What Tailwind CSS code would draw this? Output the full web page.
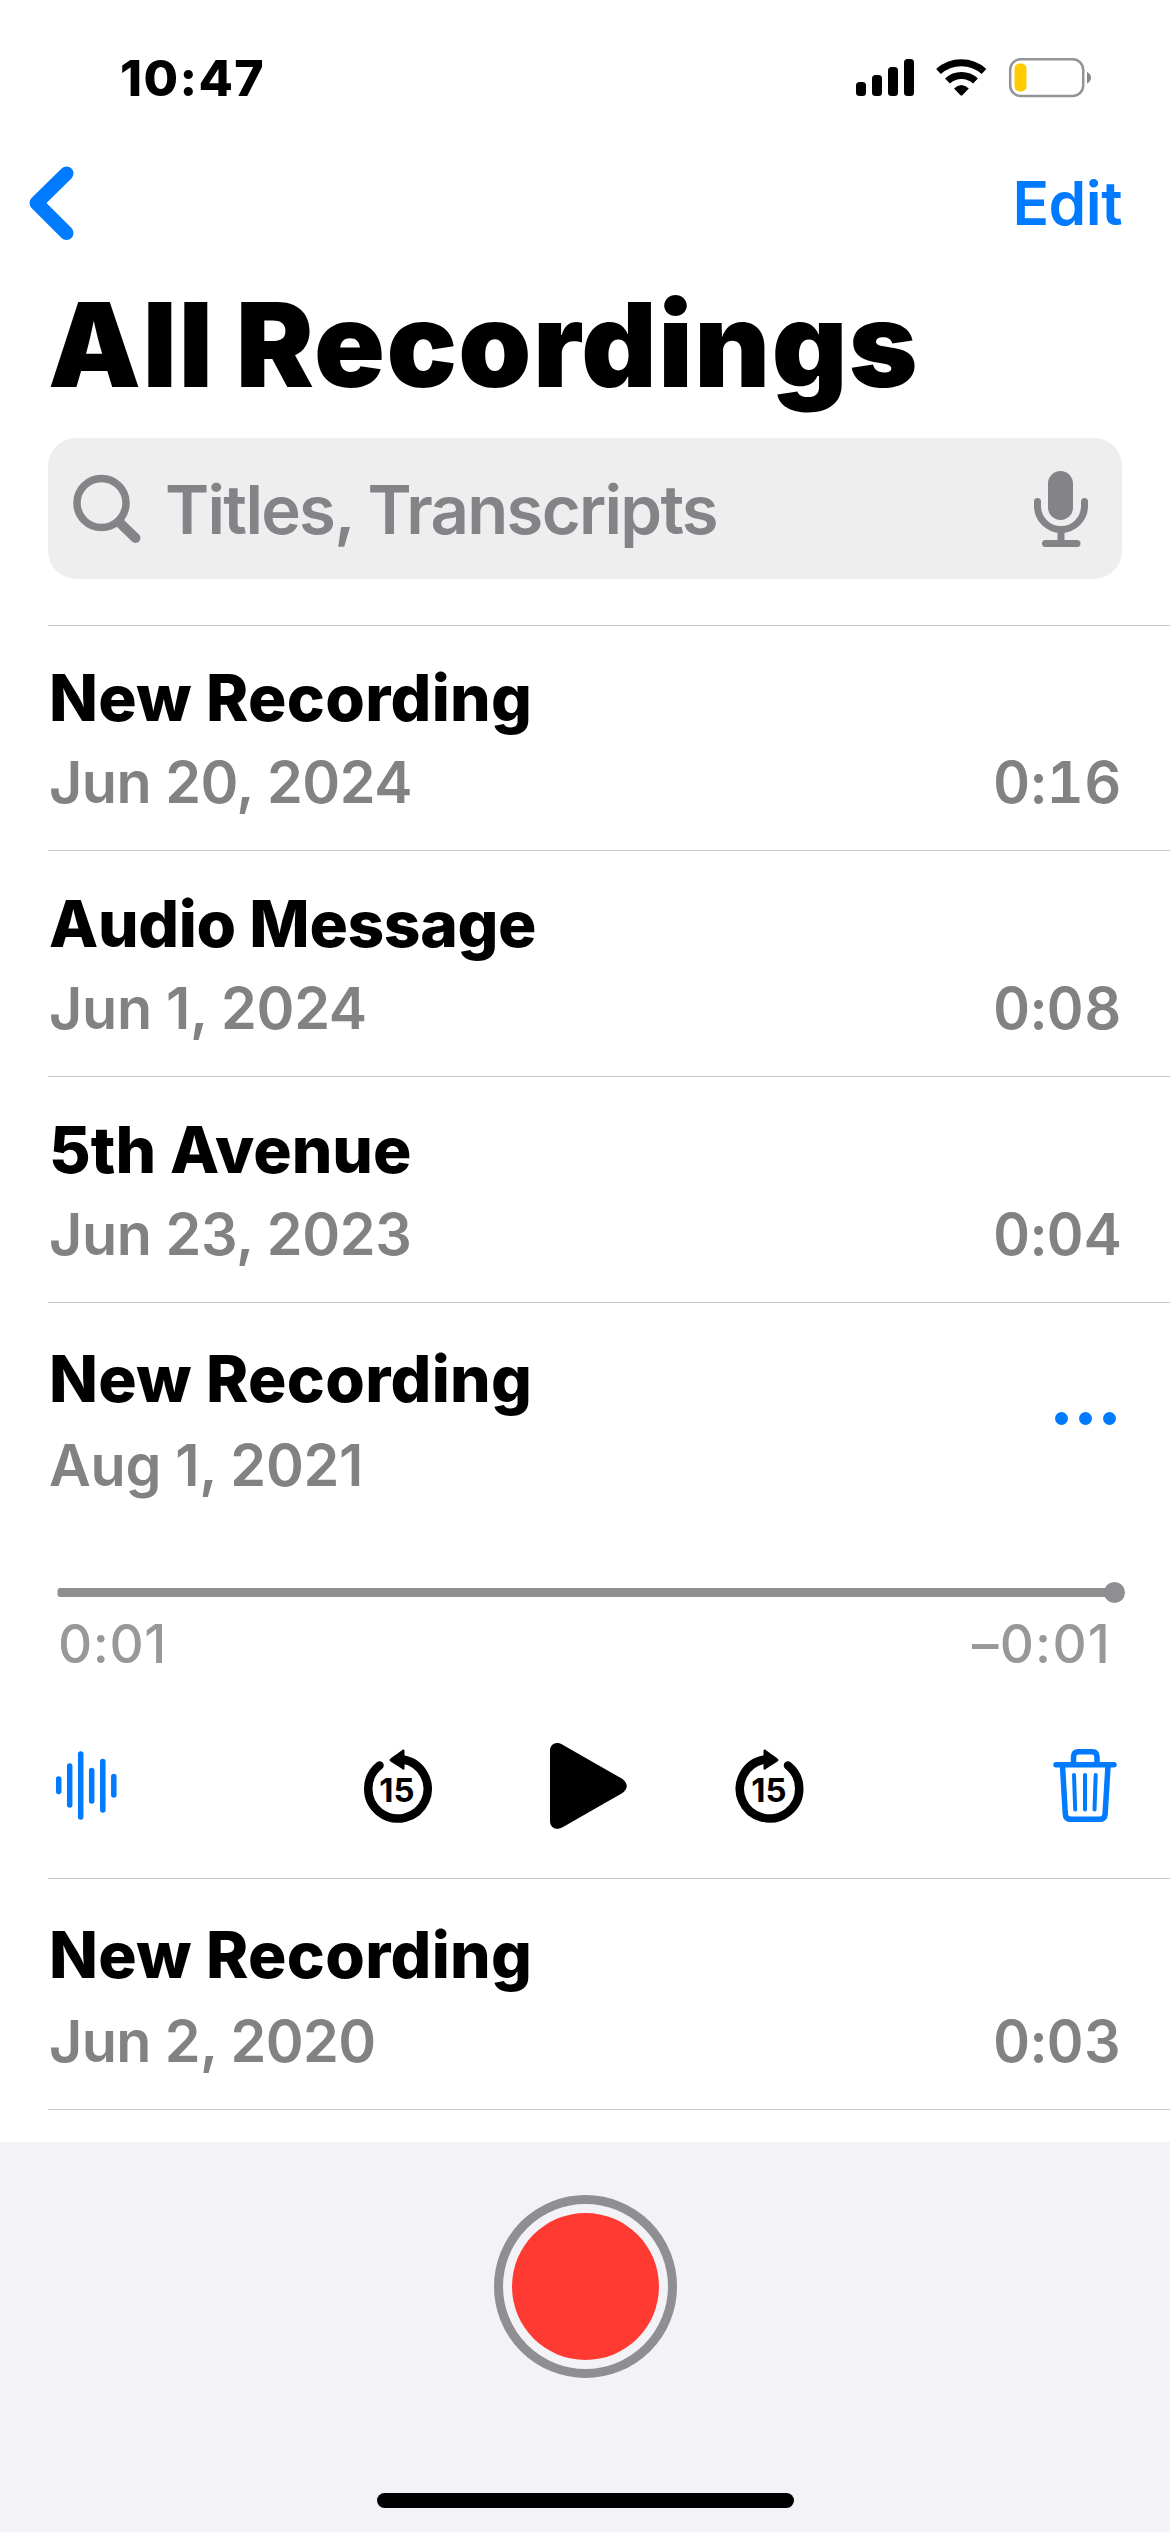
<!DOCTYPE html>
<html lang="en">
<head>
<meta charset="utf-8">
<title>All Recordings</title>
<script src="https://cdn.jsdelivr.net/npm/@tailwindcss/browser@4"></script>
</head>
<body class="bg-white">
<div class="flex h-[2532px] w-[1170px] flex-col overflow-hidden bg-white font-['Inter',sans-serif] text-black">

  <header class="flex h-[120px] shrink-0 items-start justify-between pl-[120px] pr-[78px] pt-12">
    <time class="text-[50px] leading-[60px] font-extrabold tracking-[1.4px]">10:47</time>
    <svg class="mt-[8px] h-[44px] w-[236px]" viewBox="856 56 236 44">
      <rect x="856" y="82" width="10" height="14" rx="3.5"/>
      <rect x="872" y="75" width="10" height="21" rx="3.5"/>
      <rect x="888" y="67" width="10" height="29" rx="3.5"/>
      <rect x="904" y="59" width="10" height="37" rx="3.5"/>
      <g fill="none" stroke="#000" stroke-width="7">
        <path d="M938.500 71.500A34 34 0 0 1 984 71.500"/>
        <path d="M947.500 81A20.500 20.500 0 0 1 975.500 81"/>
      </g>
      <path d="M954 88.500Q961.400 81.500 968.800 88.500L962.600 95Q961.400 96.200 960.200 95Z"/>
      <rect x="1010.200" y="59.200" width="73" height="36.800" rx="10.500" fill="none" stroke="#949498" stroke-width="2.500"/>
      <path d="M1087 72Q1091 74 1091 77.700T1087 83.500Z" fill="#88888c"/>
      <rect x="1014.500" y="63.500" width="12" height="28" rx="5" fill="#ffcc00"/>
    </svg>
  </header>

  <nav class="flex h-[154px] shrink-0 items-start justify-between pl-[28px] pr-[48px] pt-[46px] text-[#007aff]">
    <svg class="h-[75px] w-[46px]" viewBox="28 166 46 75"><path d="M66.500 173.500L36.500 203L66.500 233" fill="none" stroke="currentColor" stroke-width="14" stroke-linecap="round" stroke-linejoin="round"/></svg>
    <button class="mt-px text-[60.5px] leading-[72px] font-semibold tracking-[-0.5px]">Edit</button>
  </nav>

  <h1 class="h-[164px] shrink-0 pl-[48px] text-[117px] leading-[141px] font-black tracking-[1.4px] [word-spacing:-3.5px]">All Recordings</h1>

  <div class="mx-[48px] flex h-[141px] shrink-0 items-center rounded-[28px] bg-[#eeeeef] pr-[33px] pl-[25px] text-[#848488]">
    <svg class="h-[70px] w-[70px]" viewBox="73 473 70 70" fill="none" stroke="currentColor" stroke-linecap="round"><circle cx="101.500" cy="502" r="24.500" stroke-width="7.500"/><path d="M119 521L135.500 537" stroke-width="10"/></svg>
    <p class="ml-[22px] flex-1 pt-[2px] text-[67px] leading-[80px] font-semibold tracking-[-1.72px]">Titles, Transcripts</p>
    <svg class="h-[78px] w-[56px]" viewBox="1033 470 56 78"><rect x="1048" y="471" width="25" height="49" rx="12.500" fill="currentColor"/><path d="M1037.500 501.500V506A23.500 23.500 0 0 0 1084.500 506V501.500M1061 530V543.500M1045.500 543.500H1077" fill="none" stroke="currentColor" stroke-width="7" stroke-linecap="round"/></svg>
  </div>

  <main class="mt-[46px] ml-[48px] flex h-[1517px] shrink-0 flex-col border-t border-[#c8c8ca]">
    <article class="h-[225px] border-b border-[#c8c8ca] pt-[34px] pr-[48px]">
      <h2 class="pl-px text-[64px] leading-[76px] font-extrabold tracking-[0.3px]">New Recording</h2>
      <div class="mt-[12px] flex justify-between pl-px text-[57.5px] leading-[68px] font-semibold text-[#828284]"><span class="tracking-[-0.5px]">Jun 20, 2024</span><span class="tracking-[0.5px] tabular-nums">0:16</span></div>
    </article>
    <article class="h-[226px] border-b border-[#c8c8ca] pt-[35px] pr-[48px]">
      <h2 class="pl-px text-[64px] leading-[76px] font-extrabold tracking-[-0.35px]">Audio Message</h2>
      <div class="mt-[12px] flex justify-between pl-px text-[57.5px] leading-[68px] font-semibold text-[#828284]"><span class="tracking-[-0.3px]">Jun 1, 2024</span><span class="tracking-[0.5px] tabular-nums">0:08</span></div>
    </article>
    <article class="h-[226px] border-b border-[#c8c8ca] pt-[35px] pr-[48px]">
      <h2 class="pl-px text-[64px] leading-[76px] font-extrabold">5th Avenue</h2>
      <div class="mt-[12px] flex justify-between pl-px text-[57.5px] leading-[68px] font-semibold text-[#828284]"><span class="tracking-[-0.4px]">Jun 23, 2023</span><span class="tracking-[0.5px] tabular-nums">0:04</span></div>
    </article>
    <article class="flex h-[576px] flex-col border-b border-[#c8c8ca] pt-[38px] pr-[48px]">
      <div class="flex items-center justify-between">
        <div>
          <h2 class="pl-px text-[64px] leading-[76px] font-extrabold tracking-[0.3px]">New Recording</h2>
          <p class="mt-[14px] pl-px text-[57.5px] leading-[68px] font-semibold tracking-[-0.3px] text-[#828284]">Aug 1, 2021</p>
        </div>
        <div class="mr-[6px] flex gap-[10.500px] pb-[3px]"><i class="size-[13.500px] rounded-full bg-[#007aff]"></i><i class="size-[13.500px] rounded-full bg-[#007aff]"></i><i class="size-[13.500px] rounded-full bg-[#007aff]"></i></div>
      </div>
      <svg class="mt-[82px] ml-[8px] h-[22px] w-[1070px]" viewBox="56 1581 1070 22"><rect x="57.500" y="1588" width="1057" height="9" rx="3" fill="#8f8f91"/><circle cx="1114.500" cy="1592.500" r="10.500" fill="#8e8e93"/></svg>
      <div class="mt-[9px] flex justify-between pr-[11px] pl-[10px] text-[53px] leading-[64px] font-medium text-[#98989a]"><span class="tracking-[0.6px]">0:01</span><span class="tracking-[1.2px]">–0:01</span></div>
      <svg class="mt-[62px] h-[94px] w-[1122px] shrink-0" viewBox="48 1738 1122 94">
        <g fill="none" stroke="#007aff" stroke-width="5.500" stroke-linecap="round">
          <path d="M58.700 1779V1791.500M69.700 1766V1805M80.700 1754V1817M91.700 1770.500V1801M102.800 1761.500V1810M113.800 1776.500V1795"/>
        </g>
        <g fill="none" stroke="#000" stroke-width="8.500" stroke-linecap="round">
          <path d="M379.500 1765.500A29.700 29.700 0 1 0 403 1759.500"/>
          <path d="M788 1765.500A29.700 29.700 0 1 1 764.500 1759.500"/>
        </g>
        <path d="M390.500 1758.500L403 1749.500Q404.500 1749 404.500 1751V1768.500Q404.500 1770.500 403 1769.500L390.500 1761.500Q388.500 1760 390.500 1758.500Z"/>
        <path d="M777.500 1758.500L765 1749.500Q763.500 1749 763.500 1751V1768.500Q763.500 1770.500 765 1769.500L777.500 1761.500Q779.500 1760 777.500 1758.500Z"/>
        <text x="397" y="1801.500" text-anchor="middle" class="text-[33px] font-bold">15</text>
        <text x="769" y="1801.500" text-anchor="middle" class="text-[33px] font-bold">15</text>
        <path d="M550 1750.500C550 1744 556.500 1740.500 563 1745L622.500 1779Q631 1786 622.500 1793L563 1827C556.500 1831 550 1828 550 1821Z"/>
        <g fill="none" stroke="#007aff" stroke-width="5.500" stroke-linecap="round" stroke-linejoin="round">
          <path d="M1056 1764.700H1114M1073.500 1763V1757Q1073.500 1751.800 1078.500 1751.800H1092Q1097 1751.800 1097 1757V1763M1062.500 1766L1065.300 1814Q1065.600 1819.300 1071 1819.300H1099.500Q1104.800 1819.300 1105.100 1814L1108 1766"/>
          <path d="M1074 1775L1075.200 1809.500M1085 1775V1809.500M1095.700 1775L1094.500 1809.500" stroke-width="4"/>
        </g>
      </svg>
    </article>
    <article class="h-[231px] border-b border-[#c8c8ca] pt-[38px] pr-[48px]">
      <h2 class="pl-px text-[64px] leading-[76px] font-extrabold tracking-[0.3px]">New Recording</h2>
      <div class="mt-[14px] flex justify-between pl-px text-[57.5px] leading-[68px] font-semibold text-[#828284]"><span class="tracking-[-0.6px]">Jun 2, 2020</span><span class="tracking-[0.5px] tabular-nums">0:03</span></div>
    </article>
  </main>

  <footer class="flex flex-1 flex-col items-center justify-between bg-[#f2f2f7] pt-[53px] pb-[24px]">
    <button class="flex size-[183px] items-center justify-center rounded-full border-[9px] border-[#8e8e93]"><span class="size-[147px] rounded-full bg-[#ff3a32]"></span></button>
    <div class="h-[15px] w-[417px] rounded-full bg-black"></div>
  </footer>
</div>
</body>
</html>
